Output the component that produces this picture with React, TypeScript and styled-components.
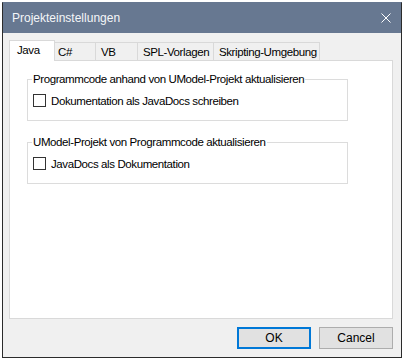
import React from "react";
import styled, { createGlobalStyle } from "styled-components";

const GlobalStyle = createGlobalStyle`
  html, body {
    margin: 0;
    padding: 0;
    background: #ffffff;
  }
  body {
    font-family: "Liberation Sans", Arial, sans-serif;
    font-size: 11.5px;
    letter-spacing: -0.4px;
    color: #000000;
  }
`;

const tabs = ["Java", "C#", "VB", "SPL-Vorlagen", "Skripting-Umgebung"];
const tabWidths = [42, 44, 43, 77, 107];

const App = () => {
  return (
    <>
      <GlobalStyle />
      <Screen>
        <Window>
          <TitleBar>
            <Title>Projekteinstellungen</Title>
            <CloseIcon width="10" height="10" viewBox="0 0 10 10">
              <path d="M0.5 0.5 L9.5 9.5 M9.5 0.5 L0.5 9.5" stroke="#ffffff" strokeWidth="1" />
            </CloseIcon>
          </TitleBar>
          <Body>
            <TabStrip>
              {tabs.map((t, i) => (
                <Tab key={t} $width={tabWidths[i]} $active={i === 0}>
                  {t}
                </Tab>
              ))}
            </TabStrip>
            <Panel>
              <Group>
                <Legend>Programmcode anhand von UModel-Projekt aktualisieren</Legend>
                <CheckRow>
                  <CheckBox />
                  <span>Dokumentation als JavaDocs schreiben</span>
                </CheckRow>
              </Group>
              <Group>
                <Legend>UModel-Projekt von Programmcode aktualisieren</Legend>
                <CheckRow>
                  <CheckBox />
                  <span>JavaDocs als Dokumentation</span>
                </CheckRow>
              </Group>
            </Panel>
            <Footer>
              <Button $primary>OK</Button>
              <Button>Cancel</Button>
            </Footer>
          </Body>
        </Window>
      </Screen>
    </>
  );
};

const Screen = styled.div`
  padding: 2px;
  width: 404px;
  height: 361px;
  box-sizing: border-box;
`;
const Window = styled.div`
  box-sizing: border-box;
  width: 400px;
  height: 356px;
  border: 1px solid #2b2b2b;
  border-top-color: #677891;
  display: flex;
  flex-direction: column;
  background: #f0f0f0;
`;
const TitleBar = styled.div`
  height: 30px;
  flex: none;
  background: #677891;
  display: flex;
  align-items: center;
  justify-content: space-between;
  padding: 0 10px 0 9px;
`;
const Title = styled.span`
  color: #f4f6f8;
  font-size: 12px;
  letter-spacing: 0;
`;
const CloseIcon = styled.svg`
  display: block;
`;
const Body = styled.div`
  flex: 1;
  display: flex;
  flex-direction: column;
  padding: 8px 8px 7px 6px;
`;
const TabStrip = styled.div`
  display: flex;
  align-items: flex-end;
  height: 20px;
  padding-left: 2px;
  margin-bottom: -1px;
  position: relative;
  z-index: 1;
`;
const Tab = styled.div<{ $width: number; $active?: boolean }>`
  box-sizing: border-box;
  width: ${(p) => p.$width + (p.$active ? 4 : 0)}px;
  height: ${(p) => (p.$active ? 21 : 18)}px;
  margin: ${(p) => (p.$active ? "0 -2px 0 -2px" : "0 0 1px -1px")};
  padding: ${(p) => (p.$active ? "2px 0 0 7px" : "2px 0 0 5px")};
  border: 1px solid #d9d9d9;
  border-bottom: none;
  background: ${(p) => (p.$active ? "#ffffff" : "#f0f0f0")};
  white-space: nowrap;
  line-height: 14px;
  position: relative;
  z-index: ${(p) => (p.$active ? 2 : 1)};
  &:first-child {
    margin-left: -2px;
  }
`;
const Panel = styled.div`
  box-sizing: border-box;
  height: 259px;
  background: #ffffff;
  border: 1px solid #d9d9d9;
  padding: 11px 0 0 17px;
  display: flex;
  flex-direction: column;
  gap: 14px;
`;
const Group = styled.fieldset`
  box-sizing: border-box;
  width: 321px;
  margin: 0;
  padding: 8px 5px 13px 5px;
  border: 1px solid #dcdcdc;
  min-width: 0;
`;
const Legend = styled.legend`
  padding: 0 1px;
  margin-left: -1px;
  line-height: 14px;
`;
const CheckRow = styled.label`
  display: flex;
  align-items: center;
  gap: 5px;
  height: 13px;
`;
const CheckBox = styled.span`
  box-sizing: border-box;
  width: 13px;
  height: 13px;
  border: 1px solid #333333;
  background: #ffffff;
  flex: none;
`;
const Footer = styled.div`
  display: flex;
  justify-content: flex-end;
  gap: 8px;
  margin-top: 8px;
`;
const Button = styled.button<{ $primary?: boolean }>`
  box-sizing: border-box;
  width: 74px;
  height: 22px;
  background: #e1e1e1;
  border: ${(p) => (p.$primary ? "2px solid #0078d7" : "1px solid #adadad")};
  font-family: inherit;
  font-size: 12px;
  letter-spacing: 0;
  color: #000000;
  padding: 0;
  border-radius: 0;
`;

export default App;
